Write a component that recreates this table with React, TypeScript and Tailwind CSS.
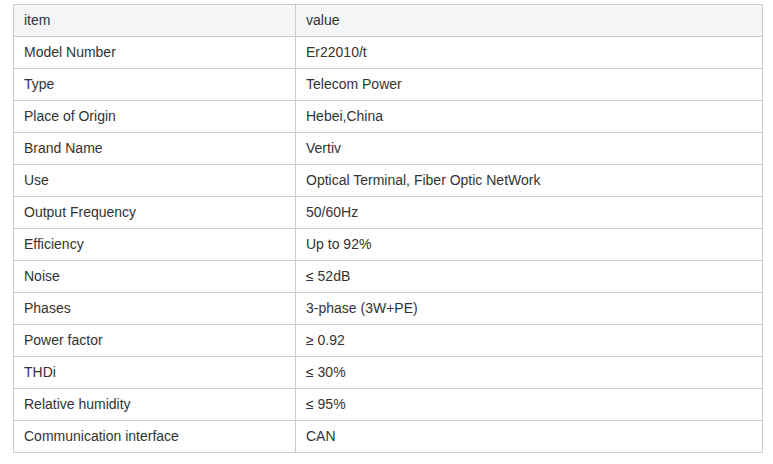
import React from "react";

const rows: [string, string][] = [
  ["Model Number", "Er22010/t"],
  ["Type", "Telecom Power"],
  ["Place of Origin", "Hebei,China"],
  ["Brand Name", "Vertiv"],
  ["Use", "Optical Terminal, Fiber Optic NetWork"],
  ["Output Frequency", "50/60Hz"],
  ["Efficiency", "Up to 92%"],
  ["Noise", "≤ 52dB"],
  ["Phases", "3-phase (3W+PE)"],
  ["Power factor", "≥ 0.92"],
  ["THDi", "≤ 30%"],
  ["Relative humidity", "≤ 95%"],
  ["Communication interface", "CAN"],
];

export default function App() {
  return (
    <div
      className="w-[773px] h-[464px] bg-white pt-[4px] pl-[13px]"
      style={{ fontFamily: '"Liberation Sans", Arial, sans-serif' }}
    >
      <table className="border-collapse w-[750px] text-[14px] text-[#333333]">
        <tbody>
          <tr className="bg-[#f4f5f7] h-[32px]">
            <td className="border border-[#cccccc] pl-[10px] w-[282px] py-0">item</td>
            <td className="border border-[#cccccc] pl-[10px] py-0">value</td>
          </tr>
          {rows.map(([k, v]) => (
            <tr key={k} className="h-[32px]">
              <td className="border border-[#cccccc] pl-[10px] py-0">{k}</td>
              <td className="border border-[#cccccc] pl-[10px] py-0">{v}</td>
            </tr>
          ))}
        </tbody>
      </table>
    </div>
  );
}
